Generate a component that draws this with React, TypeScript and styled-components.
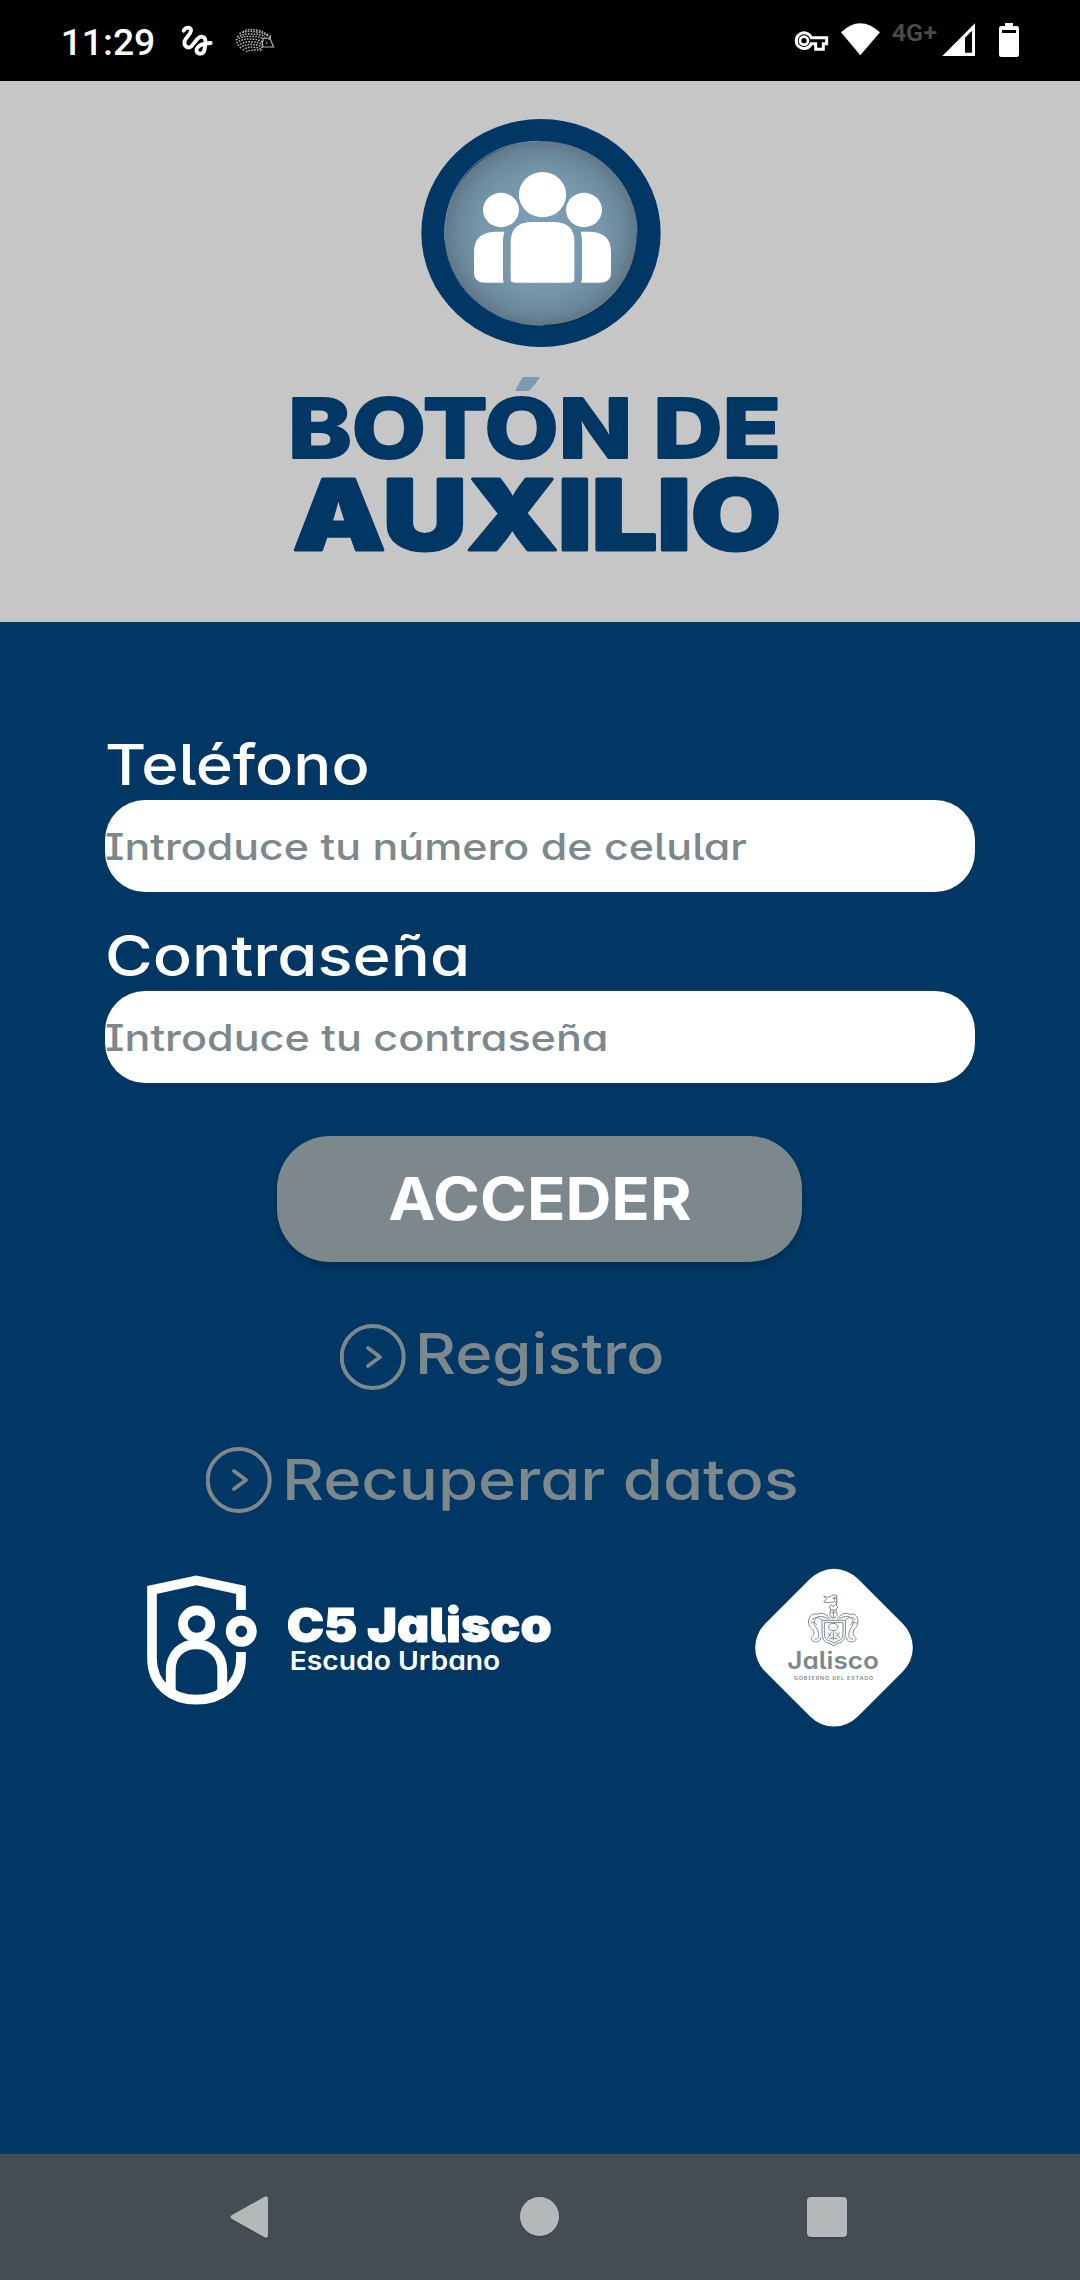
import React from "react";
import styled, { createGlobalStyle } from "styled-components";

const NAVY = "#003764";
const GREY = "#7d888d";

const GlobalStyle = createGlobalStyle`
  * { box-sizing: border-box; }
  body { margin: 0; background: ${NAVY}; }
`;

const Screen = styled.div`
  width: 1080px;
  height: 2280px;
  display: flex;
  flex-direction: column;
  overflow: hidden;
  background: ${NAVY};
  font-family: Inter, "Open Sans", sans-serif;
  font-feature-settings: "cv11", "cv05", "cv08";
`;

const StatusBar = styled.header`
  height: 81px;
  flex: none;
  background: #000;
  display: flex;
  justify-content: space-between;
`;

const Header = styled.section`
  height: 541px;
  flex: none;
  background: #c6c6c6;
  display: flex;
  flex-direction: column;
  align-items: center;
`;

const Badge = styled.svg`
  display: block;
  width: 280px;
  height: 260px;
  margin-top: 19px;
`;

const Wordmark = styled.svg`
  display: block;
  width: 540px;
  height: 230px;
  font-feature-settings: normal;
`;

const Form = styled.form`
  flex: 1;
  display: flex;
  flex-direction: column;
  padding: 108px 105px 0;
`;

const Field = styled.div`
  display: flex;
  flex-direction: column;
  margin-bottom: 29px;
`;

const Label = styled.label<{ $stretch: number }>`
  height: 70px;
  line-height: 71px;
  font-size: 56px;
  font-weight: 500;
  color: #fff;
  white-space: nowrap;
  transform: scaleX(${(p) => p.$stretch});
  transform-origin: left;
`;

const Box = styled.div`
  height: 92px;
  border-radius: 40px;
  background: #fff;
  overflow: hidden;
`;

const Placeholder = styled.div<{ $stretch: number }>`
  height: 92px;
  line-height: 93px;
  font-size: 36.7px;
  font-weight: 500;
  color: ${GREY};
  white-space: nowrap;
  transform: scaleX(${(p) => p.$stretch});
  transform-origin: left;
`;

const Button = styled.button`
  display: flex;
  align-items: center;
  justify-content: center;
  width: 525px;
  height: 126px;
  margin: 24px 0 62px 172px;
  padding: 0;
  border: 0;
  border-radius: 53px;
  background: ${GREY};
  color: #fff;
  font: 700 59px/126px Inter, "Open Sans", sans-serif;
  box-shadow: 0 4px 6px rgba(0, 0, 0, 0.2);
`;

const ButtonText = styled.span`
  transform: scaleX(1.076);
`;

const Link = styled.a<{ $left: number; $gap: number; $after: number }>`
  display: flex;
  align-items: center;
  height: 66px;
  gap: ${(p) => p.$gap}px;
  margin-left: ${(p) => p.$left}px;
  margin-bottom: ${(p) => p.$after}px;
  color: ${GREY};
`;

const LinkText = styled.span<{ $stretch: number; $lift: number }>`
  font-size: 56px;
  line-height: 66px;
  font-weight: 500;
  white-space: nowrap;
  margin-top: ${(p) => -p.$lift}px;
  transform: scaleX(${(p) => p.$stretch});
  transform-origin: left;
`;

const Logos = styled.div`
  display: flex;
  justify-content: space-between;
  align-items: flex-start;
  margin: 0 45px 0 25px;
`;

const Drawing = styled.svg`
  display: block;
  flex: none;
`;

const NavBar = styled.nav`
  height: 126px;
  flex: none;
  background: #454d52;
`;

const Chevron = () => (
  <Drawing width="66" height="66" viewBox="0 0 66 66" fill="none" stroke={GREY}>
    <circle cx="32.700" cy="33" r="31" strokeWidth="4" />
    <path d="M28 24L40 33L28 42" strokeWidth="3.8" strokeLinecap="round" strokeLinejoin="round" />
  </Drawing>
);

const StatusLeft = () => (
  <Drawing width="360" height="81" viewBox="0 0 1080 243">
    <text x="182" y="165" fill="#fff" fontFamily="Roboto, sans-serif" fontSize="113" fontWeight="500" textLength="284" lengthAdjust="spacingAndGlyphs">11:29</text>
    <path d="M551 92C557 80 574 80 573 92C571 105 554 113 553 127C553 142 567 147 576 137L592 117C603 104 619 110 616 130C615 146 614 160 602 161C590 162 586 151 593 142C601 132 613 130 632 129" fill="none" stroke="#fff" strokeWidth="11.500" strokeLinecap="round" strokeLinejoin="round" />
    <g fill="none" stroke="#b4b4b4">
      <g strokeWidth="4.500" strokeDasharray="5 3.500">
        <path d="M728 96Q741 86 757 89Q780 88 808 107" />
        <path d="M718 101Q744 90 766 96Q788 94 813 116" />
        <path d="M711 111Q740 98 764 103Q779 101 795 111" />
        <path d="M708 120Q730 106 756 110Q774 107 791 118" />
        <path d="M709 129Q730 114 754 118Q772 116 788 126" />
        <path d="M713 137Q735 123 756 126Q774 124 787 134" />
        <path d="M719 144Q738 131 758 134Q774 133 788 143" />
        <path d="M728 150Q746 139 761 142Q776 142 787 149" />
        <path d="M738 155Q756 147 784 151" />
      </g>
      <path d="M786 117Q799 111 811 119L821 141L789 141Q784 130 790 119M811 106L811 119" strokeWidth="3.500" />
      <circle cx="800" cy="129" r="2" fill="#bbb" strokeWidth="1" />
    </g>
  </Drawing>
);

const StatusRight = () => (
  <Drawing width="320" height="81" viewBox="0 0 960 243">
    <g fill="none" stroke="#fff" strokeWidth="9">
      <path d="M154 113A23.500 23.500 0 1 0 154 131H167V148H190V131H200V113Z" />
      <circle cx="132" cy="122" r="12" strokeWidth="8" />
    </g>
    <path d="M243 97Q300 42 360 97L301 166Z" fill="#fff" />
    <text x="395" y="123" fill="#4b4b4b" fontFamily="Roboto, sans-serif" fontSize="74" fontWeight="600" textLength="136" lengthAdjust="spacingAndGlyphs">4G+</text>
    <path fillRule="evenodd" d="M547 168L645 70V168ZM615 113V158H636V92Z" fill="#fff" />
    <path fillRule="evenodd" d="M735 69H759V78H770Q777 78 777 85V164Q777 171 770 171H724Q717 171 717 164V85Q717 78 724 78H735ZM726 90V99H768V90Z" fill="#fff" />
  </Drawing>
);

export default function App() {
  return (
    <>
      <GlobalStyle />
      <Screen>
        <StatusBar>
          <StatusLeft />
          <StatusRight />
        </StatusBar>
        <Header>
          <Badge viewBox="0 0 840 780">
            <defs>
              <radialGradient id="disc">
                <stop offset="0" stopColor="#7d9fb4" />
                <stop offset="0.62" stopColor="#7697ab" />
                <stop offset="0.85" stopColor="#6b899c" />
                <stop offset="1" stopColor="#607787" />
              </radialGradient>
            </defs>
            <ellipse cx="423" cy="399" rx="359" ry="342" fill={NAVY} />
            <ellipse cx="423" cy="400" rx="290" ry="277" fill="url(#disc)" />
            <path d="M135 420C125 260 240 125 415 124" fill="none" stroke="#6c90aa" strokeWidth="3" />
            <path d="M712 400C712 550 590 676 430 676" fill="none" stroke="#0a2c48" strokeWidth="3" />
            <g fill="#fff">
              <ellipse cx="427.500" cy="284" rx="71" ry="68" />
              <ellipse cx="303" cy="330" rx="54" ry="51.500" />
              <ellipse cx="552" cy="330" rx="54" ry="51.500" />
              <path d="M392 366H464Q523 368 523 424V538Q523 548 511 548H345Q332 548 332 538V424Q334 368 392 366Z" />
              <path d="M313 395H285Q222 397 222 455V518Q222 548 258 548H311Q309 540 309 530V424Q309 408 313 395Z" />
              <path d="M542 395H570Q633 397 633 455V518Q633 548 597 548H543Q546 540 546 530V424Q546 408 542 395Z" />
            </g>
          </Badge>
          <Wordmark viewBox="0 0 540 230">
            <defs>
              <clipPath id="belowAccent">
                <rect x="0" y="34.500" width="540" height="195" />
              </clipPath>
            </defs>
            <g clipPath="url(#belowAccent)" fill={NAVY} stroke={NAVY} strokeLinejoin="round" fontFamily="Inter, sans-serif">
              <text x="18" y="98" fontSize="83" fontWeight="800" strokeWidth="2" textLength="493" lengthAdjust="spacingAndGlyphs">BOTÓN DE</text>
              <text x="23" y="190" fontSize="97" fontWeight="900" strokeWidth="3" textLength="488" lengthAdjust="spacingAndGlyphs">AUXILIO</text>
            </g>
            <path d="M254 17H268Q270 17 269 19L260 30Q259 31 257 31H247Q245 31 246 29L252 18Q253 17 254 17Z" fill="#7b9bb0" />
          </Wordmark>
        </Header>
        <Form>
          <Field>
            <Label $stretch={1.13}>Teléfono</Label>
            <Box><Placeholder $stretch={1.171}>Introduce tu número de celular</Placeholder></Box>
          </Field>
          <Field>
            <Label $stretch={1.162}>Contraseña</Label>
            <Box><Placeholder $stretch={1.175}>Introduce tu contraseña</Placeholder></Box>
          </Field>
          <Button type="button"><ButtonText>ACCEDER</ButtonText></Button>
          <Link $left={235} $gap={9} $after={57}>
            <Chevron />
            <LinkText $stretch={1.13} $lift={6}>Registro</LinkText>
          </Link>
          <Link $left={101} $gap={10} $after={37}>
            <Chevron />
            <LinkText $stretch={1.16} $lift={1}>Recuperar datos</LinkText>
          </Link>
          <Logos>
            <Drawing width="440" height="180" viewBox="0 0 1320 540">
              <g fill="none" stroke="#fff" strokeWidth="29">
                <path d="M333 180V120L199 91L66 120V325C66 405 126 449 199 449S333 405 333 325V306" />
                <circle cx="200" cy="222" r="41" />
                <circle cx="334" cy="244" r="32" />
                <path d="M122 425V362Q122 325 145 303Q168 282 199 283Q230 282 254 303Q277 325 277 362V425" />
              </g>
              <path d="M108 360V392L122 425L150 435L136 416V350ZM291 360V392L277 425L249 435L263 416V350Z" fill="#fff" />
              <g fill="#fff" stroke="#fff" fontFamily="Inter, sans-serif">
                <text x="470" y="276" fontSize="142" fontWeight="900" strokeWidth="3" textLength="795" lengthAdjust="spacingAndGlyphs">C5 Jalisco</text>
                <text x="479" y="359" fontSize="78" fontWeight="600" strokeWidth="0" textLength="632" lengthAdjust="spacingAndGlyphs">Escudo Urbano</text>
              </g>
            </Drawing>
            <Drawing width="190" height="190" viewBox="0 0 570 570">
              <rect x="85.500" y="96.500" width="393" height="393" rx="100" transform="rotate(45 282 293)" fill="#fff" />
              <g fill="none" stroke={GREY} strokeWidth="3" strokeLinejoin="round">
                <path d="M251 139Q262 145 274 138T290 138V157Q281 154 274 157T251 156L260 147ZM290 136V166M277 145H289M283 139V151" />
                <path d="M268 169L274 165L280 170L287 163L293 171L288 180H272ZM272 180L269 194L276 204H284L292 194L288 180M280 180V204M274 188H287" />
                <path d="M246 211H316V250Q316 273 298 279Q286 282 281 288Q274 281 264 279Q246 273 246 250ZM253 218H309V250Q309 268 294 273L281 279L268 273Q253 268 253 250Z" />
                <ellipse cx="280" cy="231" rx="14" ry="11" />
                <path d="M280 242V272M263 249L274 260M274 247L263 265M288 247L299 264M300 248L287 260M268 267Q280 260 293 267" />
                <path d="M271 207C258 189 241 187 232 193C214 188 204 203 206 219C207 237 222 233 222 249C224 261 208 260 216 271C225 280 243 276 242 262" />
                <path d="M265 207C246 195 229 197 224 211C216 225 233 233 235 248C239 260 231 271 223 266M215 210C225 200 236 200 246 210M212 220Q224 211 230 225" />
                <path d="M291 207C304 189 321 187 330 193C348 188 356 203 353 219C351 237 340 233 340 249C338 261 354 260 346 271C337 280 319 276 320 262" />
                <path d="M297 207C316 195 333 197 338 211C346 225 329 233 327 248C323 260 331 271 339 266M347 210C337 200 326 200 316 210M350 220Q338 211 332 225" />
              </g>
              <g fill={GREY} fontFamily="Inter, sans-serif">
                <text x="142" y="356" fontSize="72" fontWeight="600" textLength="275" lengthAdjust="spacingAndGlyphs">Jalisco</text>
                <text x="162" y="389" fontSize="16" fontWeight="600" textLength="237" lengthAdjust="spacing">GOBIERNO DEL ESTADO</text>
              </g>
            </Drawing>
          </Logos>
        </Form>
        <NavBar>
          <Drawing width="1080" height="126" viewBox="0 0 1080 126" fill="#b4b8b9">
            <g fill="#3c4448" transform="translate(0 2)">
              <path d="M232 61L264 43Q268 41 268 45V81Q268 85 264 83L232 65Q229 63 232 61Z" />
              <circle cx="539.500" cy="62.500" r="19.500" />
              <rect x="807" y="43" width="40" height="40" rx="4" />
            </g>
            <path d="M232 61L264 43Q268 41 268 45V81Q268 85 264 83L232 65Q229 63 232 61Z" />
            <circle cx="539.500" cy="62.500" r="19.500" />
            <rect x="807" y="43" width="40" height="40" rx="4" />
          </Drawing>
        </NavBar>
      </Screen>
    </>
  );
}
